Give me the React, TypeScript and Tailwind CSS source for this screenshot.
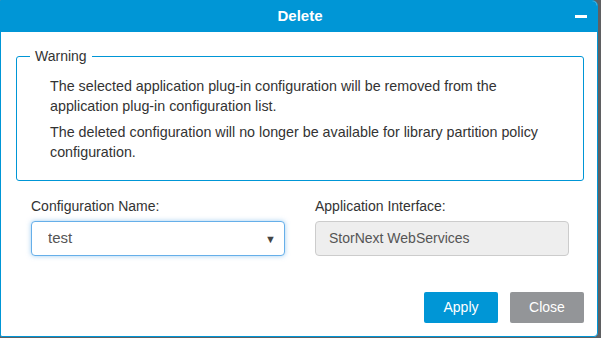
import React, { useState } from 'react';

const App: React.FC = () => {
  const [config, setConfig] = useState('test');

  return (
    <div className="w-[601px] h-[338px] bg-[#5f6062] font-['Liberation_Sans',Arial,sans-serif] text-[14px] text-[#333]">
      <div className="w-[598px] h-[337px] bg-white border border-[#0096d6] rounded-tr-[6px] rounded-br-[4px] rounded-bl-[2px] overflow-hidden flex flex-col">
        {/* title bar */}
        <div className="h-[31px] bg-[#0096d6] flex items-center relative shrink-0">
          <div className="flex-1 text-center text-white font-bold text-[15px] pl-[2px]">Delete</div>
          <div className="absolute right-[10px] top-[14px] w-[12px] h-[3px] bg-white" />
        </div>

        <div className="pl-[15px] pr-[13px] pt-[17px] flex flex-col">
          <fieldset className="border border-[#0096d6] rounded-[3px] px-[13px] pb-[18px] pt-[13px]">
            <legend className="px-[5px] text-[14px] text-[#333] leading-[14px]">Warning</legend>
            <div className="pl-[20px] text-[14.3px]">
              <p className="leading-[20px] mb-[6px]">
                The selected application plug-in configuration will be removed from the
                <br />
                application plug-in configuration list.
              </p>
              <p className="leading-[20px]">
                The deleted configuration will no longer be available for library partition policy
                <br />
                configuration.
              </p>
            </div>
          </fieldset>

          <div className="flex gap-[30px] px-[15px] pt-[17px]">
            <div className="flex flex-col w-[254px]">
              <label className="leading-[16px] mb-[7px]">Configuration Name:</label>
              <div className="relative w-[254px]">
                <select
                  value={config}
                  onChange={e => setConfig(e.target.value)}
                  className="appearance-none w-full h-[35px] rounded-[4px] border border-[#66afe9] bg-white pl-[16px] pr-[24px] text-[15px] text-[#555] shadow-[0_0_5px_rgba(102,175,233,0.6)] outline-none font-['Liberation_Sans',Arial,sans-serif]"
                >
                  <option value="test">test</option>
                </select>
                <span className="absolute right-[9px] top-[10px] text-[11px] text-[#444] pointer-events-none">▼</span>
              </div>
            </div>
            <div className="flex flex-col w-[254px]">
              <label className="leading-[16px] mb-[7px]">Application Interface:</label>
              <div className="w-[254px] h-[35px] rounded-[4px] border border-[#ccc] bg-[#eee] pl-[13px] flex items-center text-[14px] text-[#555]">
                StorNext WebServices
              </div>
            </div>
          </div>

          <div className="flex justify-end gap-[12px] mt-[36px]">
            <button className="w-[74px] h-[31px] rounded-[2px] bg-[#0096d6] text-white text-[14px]">Apply</button>
            <button className="w-[74px] h-[31px] rounded-[2px] bg-[#939598] text-white text-[14px]">Close</button>
          </div>
        </div>
      </div>
    </div>
  );
};

export default App;
